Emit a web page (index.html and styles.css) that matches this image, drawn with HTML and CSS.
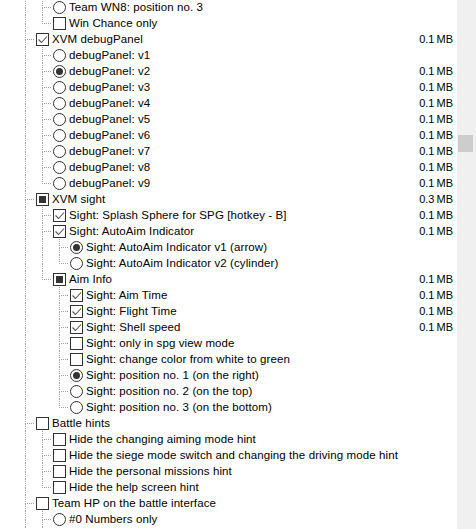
FILE: index.html
```html
<!DOCTYPE html>
<html lang="en">
<head>
    <meta charset="UTF-8">
    <title>Mod Options</title>
    <link rel="stylesheet" href="styles.css">
</head>
<body>
<div class="window">
    <div class="tree">
        <div class="row"><span class="g pipe"></span><span class="g tee"></span><span class="rb"></span><span class="label">Team WN8: position no. 3</span></div>
        <div class="row"><span class="g pipe"></span><span class="g end"></span><span class="cb"></span><span class="label">Win Chance only</span></div>

        <div class="row"><span class="g tee"></span><span class="cb on"><svg width="11" height="11"><polyline points="1.5,5.5 4.5,8.5 10,2.5"/></svg></span><span class="label">XVM debugPanel</span><span class="size">0.1 MB</span></div>
        <div class="row"><span class="g pipe"></span><span class="g tee"></span><span class="rb"></span><span class="label">debugPanel: v1</span></div>
        <div class="row"><span class="g pipe"></span><span class="g tee"></span><span class="rb on"><i></i></span><span class="label">debugPanel: v2</span><span class="size">0.1 MB</span></div>
        <div class="row"><span class="g pipe"></span><span class="g tee"></span><span class="rb"></span><span class="label">debugPanel: v3</span><span class="size">0.1 MB</span></div>
        <div class="row"><span class="g pipe"></span><span class="g tee"></span><span class="rb"></span><span class="label">debugPanel: v4</span><span class="size">0.1 MB</span></div>
        <div class="row"><span class="g pipe"></span><span class="g tee"></span><span class="rb"></span><span class="label">debugPanel: v5</span><span class="size">0.1 MB</span></div>
        <div class="row"><span class="g pipe"></span><span class="g tee"></span><span class="rb"></span><span class="label">debugPanel: v6</span><span class="size">0.1 MB</span></div>
        <div class="row"><span class="g pipe"></span><span class="g tee"></span><span class="rb"></span><span class="label">debugPanel: v7</span><span class="size">0.1 MB</span></div>
        <div class="row"><span class="g pipe"></span><span class="g tee"></span><span class="rb"></span><span class="label">debugPanel: v8</span><span class="size">0.1 MB</span></div>
        <div class="row"><span class="g pipe"></span><span class="g end"></span><span class="rb"></span><span class="label">debugPanel: v9</span><span class="size">0.1 MB</span></div>

        <div class="row"><span class="g tee"></span><span class="cb part"><i></i></span><span class="label">XVM sight</span><span class="size">0.3 MB</span></div>
        <div class="row"><span class="g pipe"></span><span class="g tee"></span><span class="cb on"><svg width="11" height="11"><polyline points="1.5,5.5 4.5,8.5 10,2.5"/></svg></span><span class="label">Sight: Splash Sphere for SPG [hotkey - B]</span><span class="size">0.1 MB</span></div>
        <div class="row"><span class="g pipe"></span><span class="g tee"></span><span class="cb on"><svg width="11" height="11"><polyline points="1.5,5.5 4.5,8.5 10,2.5"/></svg></span><span class="label">Sight: AutoAim Indicator</span><span class="size">0.1 MB</span></div>
        <div class="row"><span class="g pipe"></span><span class="g pipe"></span><span class="g tee"></span><span class="rb on"><i></i></span><span class="label">Sight: AutoAim Indicator v1 (arrow)</span></div>
        <div class="row"><span class="g pipe"></span><span class="g pipe"></span><span class="g end"></span><span class="rb"></span><span class="label">Sight: AutoAim Indicator v2 (cylinder)</span></div>
        <div class="row"><span class="g pipe"></span><span class="g end"></span><span class="cb part"><i></i></span><span class="label">Aim Info</span><span class="size">0.1 MB</span></div>
        <div class="row"><span class="g pipe"></span><span class="g"></span><span class="g tee"></span><span class="cb on"><svg width="11" height="11"><polyline points="1.5,5.5 4.5,8.5 10,2.5"/></svg></span><span class="label">Sight: Aim Time</span><span class="size">0.1 MB</span></div>
        <div class="row"><span class="g pipe"></span><span class="g"></span><span class="g tee"></span><span class="cb on"><svg width="11" height="11"><polyline points="1.5,5.5 4.5,8.5 10,2.5"/></svg></span><span class="label">Sight: Flight Time</span><span class="size">0.1 MB</span></div>
        <div class="row"><span class="g pipe"></span><span class="g"></span><span class="g tee"></span><span class="cb on"><svg width="11" height="11"><polyline points="1.5,5.5 4.5,8.5 10,2.5"/></svg></span><span class="label">Sight: Shell speed</span><span class="size">0.1 MB</span></div>
        <div class="row"><span class="g pipe"></span><span class="g"></span><span class="g tee"></span><span class="cb"></span><span class="label">Sight: only in spg view mode</span></div>
        <div class="row"><span class="g pipe"></span><span class="g"></span><span class="g tee"></span><span class="cb"></span><span class="label">Sight: change color from white to green</span></div>
        <div class="row"><span class="g pipe"></span><span class="g"></span><span class="g tee"></span><span class="rb on"><i></i></span><span class="label">Sight: position no. 1 (on the right)</span></div>
        <div class="row"><span class="g pipe"></span><span class="g"></span><span class="g tee"></span><span class="rb"></span><span class="label">Sight: position no. 2 (on the top)</span></div>
        <div class="row"><span class="g pipe"></span><span class="g"></span><span class="g end"></span><span class="rb"></span><span class="label">Sight: position no. 3 (on the bottom)</span></div>

        <div class="row"><span class="g tee"></span><span class="cb"></span><span class="label">Battle hints</span></div>
        <div class="row"><span class="g pipe"></span><span class="g tee"></span><span class="cb"></span><span class="label">Hide the changing aiming mode hint</span></div>
        <div class="row"><span class="g pipe"></span><span class="g tee"></span><span class="cb"></span><span class="label">Hide the siege mode switch and changing the driving mode hint</span></div>
        <div class="row"><span class="g pipe"></span><span class="g tee"></span><span class="cb"></span><span class="label">Hide the personal missions hint</span></div>
        <div class="row"><span class="g pipe"></span><span class="g end"></span><span class="cb"></span><span class="label">Hide the help screen hint</span></div>

        <div class="row"><span class="g tee"></span><span class="cb"></span><span class="label">Team HP on the battle interface</span></div>
        <div class="row"><span class="g pipe"></span><span class="g tee"></span><span class="rb"></span><span class="label">#0 Numbers only</span></div>
        <div class="row"><span class="g pipe"></span><span class="g tee"></span><span class="rb"></span></div>
    </div>
    <div class="scrollbar"><div class="thumb"></div></div>
</div>
</body>
</html>
```

FILE: styles.css
```css
html, body {
    margin: 0;
    padding: 0;
    background: #fff;
    overflow: hidden;
}

.window {
    display: flex;
    height: 529px;
    overflow: hidden;
    font-family: "Liberation Sans", Arial, sans-serif;
    font-size: 11.5px;
    letter-spacing: 0.1px;
    color: #000;
}

.tree {
    flex: 1;
    margin-top: -1px;
    padding-left: 17px;
}

.row {
    display: flex;
    height: 16px;
    line-height: 16px;
    padding-right: 4px;
}

/* tree guide lines */
.g {
    flex: none;
    width: 17px;
    height: 16px;
    display: flex;
    flex-direction: column;
}
.g::before,
.g::after {
    content: "";
    display: block;
    margin-left: 8px;
    box-sizing: border-box;
}
.g::before { height: 9px; }
.g::after { height: 7px; }

.pipe::before,
.pipe::after,
.tee::after {
    border-left: 1px dotted #a0a0a0;
}
.tee::before,
.end::before {
    width: 9px;
    border-left: 1px dotted #a0a0a0;
    border-bottom: 1px dotted #a0a0a0;
}

/* checkbox + radio */
.cb, .rb {
    flex: none;
    width: 13px;
    height: 13px;
    box-sizing: border-box;
    border: 1px solid #333;
    margin: 2px 3px 0 2px;
    background: #fff;
}
.rb { border-radius: 50%; }

.cb svg {
    display: block;
}
.cb polyline {
    fill: none;
    stroke: #555;
    stroke-width: 1.1;
}
.cb.part i {
    display: block;
    width: 7px;
    height: 7px;
    margin: 2px;
    background: #333;
}
.rb.on i {
    display: block;
    width: 7px;
    height: 7px;
    margin: 2px;
    border-radius: 50%;
    background: #333;
}

.label {
    flex: 1;
    white-space: nowrap;
}

.size {
    flex: none;
    white-space: nowrap;
    font-size: 11px;
    letter-spacing: 0;
    word-spacing: -1px;
}

.scrollbar {
    flex: none;
    width: 19px;
    background: #f0f0f0;
}
.thumb {
    margin: 135px 0 0 1px;
    width: 15px;
    height: 17px;
    background: #cdcdcd;
}
```
